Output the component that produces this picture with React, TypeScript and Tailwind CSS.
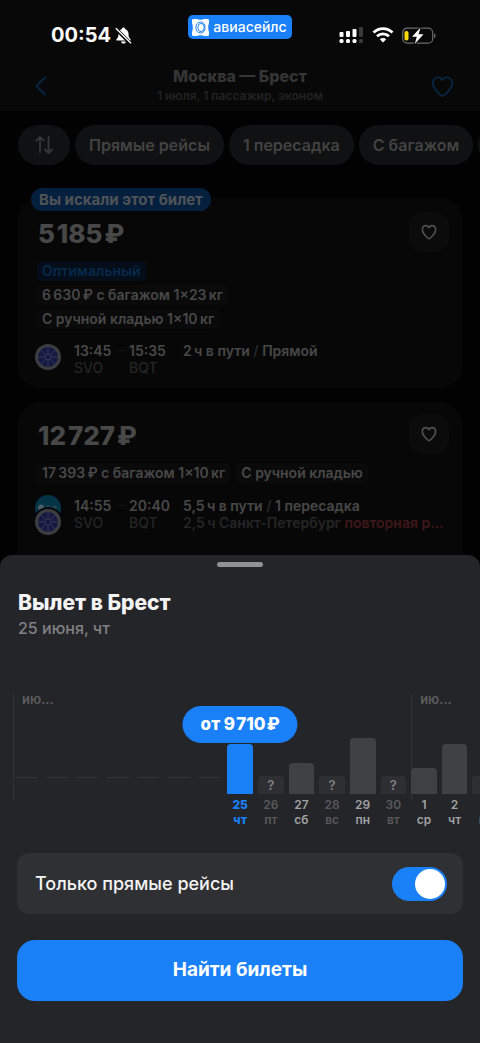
import { useState } from "react";
import clsx from "clsx";

type Day = {
    day?: string;
    weekday?: string;
    height?: number;
};

// The first days of the range are already gone and have no price
const days: Day[] = [
    {}, {}, {}, {}, {}, {}, {},
    { day: '25', weekday: 'чт', height: 50 },
    { day: '26', weekday: 'пт' },
    { day: '27', weekday: 'сб', height: 31 },
    { day: '28', weekday: 'вс' },
    { day: '29', weekday: 'пн', height: 56 },
    { day: '30', weekday: 'вт' },
    { day: '1', weekday: 'ср', height: 26 },
    { day: '2', weekday: 'чт', height: 50 },
    { day: '3', weekday: 'пт' },
];

const filters = ['Прямые рейсы', '1 пересадка', 'С багажом', 'Авиакомпании'];

function Heart({ className }: { className?: string }) {
    return (
        <svg className={className} viewBox="0 0 24 24" fill="none" stroke="currentColor" strokeLinejoin="round" aria-hidden="true">
            <path d="M12 22C11 22 2 15 2 8.6C2 5 4.400 2.500 7.400 2.500C9.500 2.500 11 3.700 12 5.500C13 3.700 14.500 2.500 16.600 2.500C19.600 2.500 22 5 22 8.600C22 15 13 22 12 22Z" />
        </svg>
    )
}

function Wheel() {
    return (
        <svg className="size-[26px]" viewBox="0 0 26 26" aria-hidden="true">
            <circle cx="13" cy="13" r="13" fill="#3b3d40" />
            <circle cx="13" cy="13" r="10" fill="#171945" />
            <g stroke="#36384f" strokeWidth="1">
                <path d="M13 3V23M3 13H23M6 6L20 20M20 6L6 20" />
            </g>
            <circle cx="13" cy="13" r="3" fill="#171945" stroke="#36384f" />
        </svg>
    )
}

function DotsLogo() {
    return (
        <svg className="size-[26px] shrink-0" viewBox="0 0 26 26" aria-hidden="true">
            <circle cx="13" cy="13" r="13" fill="#053446" />
            <circle cx="6" cy="12.500" r="3" fill="#4a5f67" />
            <circle cx="13" cy="12.500" r="2.500" fill="#1f4350" />
            <circle cx="19.500" cy="12.500" r="2.500" fill="#1f4350" />
        </svg>
    )
}

function StatusBar() {
    return (
        <div className="flex h-[60px] items-start justify-between px-11">
            <div className="flex flex-1 items-center gap-1 pt-[23px] text-white">
                <span className="ml-[7px] text-[20px] leading-6 font-bold">00:54</span>
                <svg className="size-[17px]" viewBox="0 0 17 17" aria-hidden="true">
                    <path d="M8.500 0.500C9.400 0.500 10 1.100 10 1.900C12.300 2.600 13.500 4.500 13.500 7C13.500 10 14.200 11 15.600 12.300V13.500H1.400V12.300C2.800 11 3.500 10 3.500 7C3.500 4.500 4.700 2.600 7 1.900C7 1.100 7.600 0.500 8.500 0.500ZM6 14.500H11C10.800 15.800 9.800 16.600 8.500 16.600C7.200 16.600 6.200 15.800 6 14.500Z" fill="#fff" />
                    <path d="M0.500 1.500L15.500 16.500" stroke="#080808" strokeWidth="3.500" />
                    <path d="M0.800 1.300L16 16.300" stroke="#fff" strokeWidth="1.300" />
                </svg>
            </div>
            <div className="mt-[15px] flex h-6 items-center gap-1 rounded-[5px] bg-[#1a80f8] pr-[5px] pl-1 text-white">
                <svg className="size-[17px]" viewBox="0 0 17 17" aria-hidden="true">
                    <path d="M1.500 0H5C6.500 1 10.500 1 12 0H15.500C16.500 0 17 0.700 17 1.500V4C16 6 16 11 17 13V15.500C17 16.400 16.500 17 15.500 17H12C10.500 16 6.500 16 5 17H1.500C0.500 17 0 16.400 0 15.500V13C1 11 1 6 0 4V1.500C0 0.700 0.500 0 1.500 0Z" fill="#fff" />
                    <rect x="4" y="3" width="9" height="11" rx="4.500" fill="none" stroke="#1a80f8" />
                    <rect x="6" y="4.500" width="6" height="8" rx="3" fill="none" stroke="#1a80f8" />
                </svg>
                <span className="text-[14px] leading-6 font-medium">авиасейлс</span>
            </div>
            <div className="flex flex-1 items-center justify-end gap-2 pt-[26px]">
                <svg className="h-[18px] w-[25px]" viewBox="0 0 25 18" aria-hidden="true">
                    <g fill="#fff">
                        <rect x="0.500" y="6" width="4" height="5" rx="1" />
                        <rect x="7" y="5" width="4" height="6" rx="1" />
                        <rect x="13.500" y="3" width="4" height="8" rx="1" />
                        <rect x="0.500" y="13" width="4" height="4" rx="1.500" />
                        <rect x="7" y="13" width="4" height="4" rx="1.500" />
                        <rect x="13.500" y="13" width="4" height="4" rx="1.500" />
                    </g>
                    <g fill="#3a3a3b">
                        <rect x="20" y="1" width="4" height="10" rx="1" />
                        <rect x="20" y="13" width="4" height="4" rx="1.500" />
                    </g>
                </svg>
                <svg className="h-4 w-[22px]" viewBox="0 0 22 16" fill="none" stroke="#fff" strokeWidth="2.800" aria-hidden="true">
                    <path d="M1.500 5.500C7 0.200 15 0.200 20.500 5.500" />
                    <path d="M5 9.300C8.500 6 13.500 6 17 9.300" />
                    <path d="M11 15.500L7.800 12.300C9.500 10.700 12.500 10.700 14.200 12.300Z" fill="#fff" stroke="none" />
                </svg>
                <svg className="h-[17px] w-[34px]" viewBox="0 0 34 17" aria-hidden="true">
                    <rect x="0.700" y="1.200" width="30" height="15" rx="4.500" fill="none" stroke="#6b6b6c" strokeWidth="1.200" />
                    <path d="M32 6.500C34 7 34 10.500 32 11Z" fill="#6b6b6c" />
                    <rect x="2.500" y="4" width="4" height="9.500" rx="1.800" fill="#f7d90c" />
                    <path d="M18.500 0.500L10 9.800H14.800L12.800 17L21.500 7.300H16.600Z" fill="#fff" stroke="#080808" strokeWidth="2" paintOrder="stroke" />
                </svg>
            </div>
        </div>
    )
}

function Header() {
    return (
        <header className="flex items-center justify-between px-[30px] pt-[6px] pb-[5px] text-[#062543]">
            <button className="flex size-6 items-center" aria-label="Назад">
                <svg className="h-5 w-5" viewBox="0 0 20 20" fill="none" stroke="currentColor" strokeWidth="2" strokeLinecap="round" strokeLinejoin="round">
                    <path d="M15 1.500L6.500 10L15 18.500" />
                </svg>
            </button>
            <div className="text-center">
                <h1 className="text-[16px] leading-5 font-extrabold text-[#353535]">Москва — Брест</h1>
                <p className="text-[12px] leading-5 font-semibold text-[#222]">1 июля, 1 пассажир, эконом</p>
            </div>
            <button className="-mr-1 flex h-6 w-7 items-center justify-end" aria-label="В избранное">
                <Heart className="size-[23px] stroke-2" />
            </button>
        </header>
    )
}

function Filters() {
    return (
        <div className="flex gap-[5px] overflow-hidden bg-[#020202] pt-[14px] pl-[18px] text-[16px] font-semibold text-[#434343]">
            <button className="flex h-10 w-[52px] shrink-0 items-center justify-center rounded-full bg-[#0f1112]" aria-label="Сортировка">
                <svg className="h-5 w-[18px]" viewBox="0 0 18 20" fill="none" stroke="#363738" strokeWidth="1.800" strokeLinecap="round" strokeLinejoin="round">
                    <path d="M5 17V2M1.500 5.500L5 2L8.500 5.500M13.500 2V18M10 14.500L13.500 18L17 14.500" />
                </svg>
            </button>
            {filters.map((filter) => (
                <button key={filter} className="h-10 shrink-0 rounded-full bg-[#0f1112] px-[14px] whitespace-nowrap">{filter}</button>
            ))}
        </div>
    )
}

function Tag({ children, blue }: { children: React.ReactNode, blue?: boolean }) {
    return (
        <span className={clsx('h-5 rounded px-[5px] text-[14px] leading-5 font-semibold', blue ? 'bg-[#040d18] text-[#06294c]' : 'bg-[#0a0a0a] text-[#484848]')}>
            {children}
        </span>
    )
}

function Times({ from, to }: { from: string, to: string }) {
    return (
        <div className="grid grid-cols-[42px_13px_54px] content-start text-[14px] leading-[17px] font-semibold text-[#484848]">
            <span>{from}</span>
            <span className="mt-2 mr-1 ml-px h-px bg-[#151515]" />
            <span>{to}</span>
            <span className="col-span-2 font-medium text-[#252525]">SVO</span>
            <span className="font-medium text-[#252525]">BQT</span>
        </div>
    )
}

function LikeButton() {
    return (
        <button className="flex size-10 items-center justify-center rounded-[14px] bg-[#0b0b0b] text-[#505050]" aria-label="Сохранить билет">
            <Heart className="size-4 stroke-[2.500]" />
        </button>
    )
}

function Tickets() {
    return (
        <main className="flex-1 overflow-hidden bg-[#020202] px-[18px] pt-[33px]">
            <article className="relative rounded-[22px] bg-[#070707] px-[17px] pt-[14px] pb-[9px]">
                <span className="absolute -top-[10px] left-[13px] h-[23px] rounded-full bg-[#04203e] px-2 text-[15px] leading-[23px] font-bold text-[#505356]">
                    Вы искали этот билет
                </span>
                <div className="-mr-1 flex items-start justify-between pl-[3px]">
                    <h2 className="text-[26px] leading-11 font-extrabold text-[#484848]">5&#8202;185&#8202;₽</h2>
                    <LikeButton />
                </div>
                <div className="mt-[5px] flex flex-col items-start gap-1 pl-[2px]">
                    <Tag blue>Оптимальный</Tag>
                    <Tag>6&#8201;630&#8201;₽ с багажом 1×23&#8201;кг</Tag>
                    <Tag>С ручной кладью 1×10&#8201;кг</Tag>
                </div>
                <div className="mt-[13px] flex h-[37px] gap-[13px]">
                    <div className="pt-[2px]">
                        <Wheel />
                    </div>
                    <Times from="13:45" to="15:35" />
                    <p className="-ml-[13px] text-[14px] leading-[17px] font-semibold text-[#484848]">
                        2&#8201;ч в пути <span className="text-[#292929]">/</span> Прямой
                    </p>
                </div>
            </article>

            <article className="mt-[14px] rounded-t-[22px] bg-[#070707] px-[17px] pt-3 pb-[23px]">
                <div className="-mr-1 flex items-start justify-between pl-[3px]">
                    <h2 className="text-[26px] leading-11 font-extrabold text-[#484848]">12&#8202;727&#8202;₽</h2>
                    <LikeButton />
                </div>
                <div className="mt-[5px] flex gap-[6px] pl-[2px]">
                    <Tag>17&#8201;393&#8201;₽ с багажом 1×10&#8201;кг</Tag>
                    <Tag>С ручной кладью</Tag>
                </div>
                <div className="mt-[14px] flex h-[35px] gap-[13px]">
                    <div className="-mt-[2px] flex shrink-0 flex-col">
                        <DotsLogo />
                        <div className="-mt-3 shrink-0 rounded-full ring-2 ring-[#070707]">
                            <Wheel />
                        </div>
                    </div>
                    <Times from="14:55" to="20:40" />
                    <div className="-ml-[13px] min-w-0 flex-1 text-[14px] leading-[17px] font-semibold text-[#484848]">
                        <p>5,5&#8201;ч в пути <span className="text-[#292929]">/</span> 1 пересадка</p>
                        <p className="truncate text-[#3f1719]">
                            <span className="text-[#252525]">2,5&#8201;ч Санкт-Петербург</span> повторная регистрация
                        </p>
                    </div>
                </div>
            </article>
        </main>
    )
}

function PriceChart({ selected, setSelected }: { selected: string, setSelected: (day: string) => void }) {
    return (
        <div className="mt-[51px] overflow-hidden pt-1 pl-[13px]">
            <div className="grid w-[485px]">
                <div className="col-start-1 row-start-1 grid h-[105px] grid-cols-16 gap-x-[5px] text-[13px] leading-2 font-semibold text-[#5c5d5f]">
                    <div className="col-span-13 border-l border-[#323336] pl-2">ию...</div>
                    <div className="col-span-3 border-l border-[#323336] pl-2">ию...</div>
                </div>
                <div className="col-start-1 row-start-1 grid grid-cols-16 gap-x-[5px]">
                    {days.map(({ day, weekday, height }, i) => {
                        if (!day) {
                            return <span key={i} className="mt-[82px] mr-[2px] ml-[2px] h-px bg-[#343538]" />
                        }

                        const active = day === selected;

                        return (
                            <button
                                key={i}
                                onClick={() => setSelected(day)}
                                className={clsx(
                                    'relative flex flex-col items-stretch text-center text-[12px] leading-[15px]',
                                    active ? 'font-extrabold text-[#1a80f8]' : height ? 'font-semibold text-[#a0a1a3]' : 'font-semibold text-[#58595c]'
                                )}
                            >
                                <span className="flex h-[99px] flex-col justify-end">
                                    {height ? (
                                        <span className={clsx('rounded-t', active ? 'bg-[#1a80f8]' : 'bg-[#404144]')} style={{ height }} />
                                    ) : (
                                        <span className="h-[18px] rounded-t bg-[#2e2f32] text-[13px] leading-[18px] text-[#808184]">?</span>
                                    )}
                                </span>
                                <span className="mt-[3px]">{day}</span>
                                <span>{weekday}</span>
                                {active && (
                                    <span className="absolute top-[11px] left-1/2 h-[37px] -translate-x-1/2 rounded-full bg-[#1a80f8] px-[18px] text-[17px] leading-[37px] font-extrabold whitespace-nowrap text-white">
                                        от 9&#8202;710&#8202;₽
                                    </span>
                                )}
                            </button>
                        )
                    })}
                </div>
            </div>
        </div>
    )
}

export default function App() {
    const [selected, setSelected] = useState('25');
    const [onlyDirect, setOnlyDirect] = useState(true);

    return (
        <div className="flex min-h-screen flex-col bg-[#020202] font-['Inter',sans-serif]">
            <div className="bg-[#080808]">
                <StatusBar />
                <Header />
            </div>
            <Filters />
            <Tickets />
            <section className="rounded-t-xl bg-[#242529] pt-[7px] pb-[42px]">
                <div className="mx-auto h-[5px] w-[46px] rounded-full bg-[#919294]" />
                <div className="px-[18px] pt-6">
                    <h2 className="text-[21px] leading-6 font-extrabold text-[#f4f4f4]">Вылет в Брест</h2>
                    <p className="mt-px text-[16px] leading-6 font-medium text-[#808184]">25 июня, чт</p>
                </div>
                <PriceChart selected={selected} setSelected={setSelected} />
                <div className="px-[17px] pt-[26px]">
                    <label className="flex h-[61px] items-center justify-between rounded-xl bg-[#2f3034] pr-4 pl-[18px] text-[18px] font-medium text-[#f4f4f4]">
                        Только прямые рейсы
                        <input
                            type="checkbox"
                            role="switch"
                            checked={onlyDirect}
                            onChange={(e) => setOnlyDirect(e.target.checked)}
                            className="flex h-[34px] w-[55px] appearance-none items-center rounded-full bg-[#4a4b4f] px-[2px] before:size-[30px] before:rounded-full before:bg-white checked:justify-end checked:bg-[#1a80f8]"
                        />
                    </label>
                    <button className="mt-[26px] h-[61px] w-full rounded-[18px] bg-[#1a80f8] text-[19px] font-bold text-white">Найти билеты</button>
                </div>
            </section>
        </div>
    )
}
